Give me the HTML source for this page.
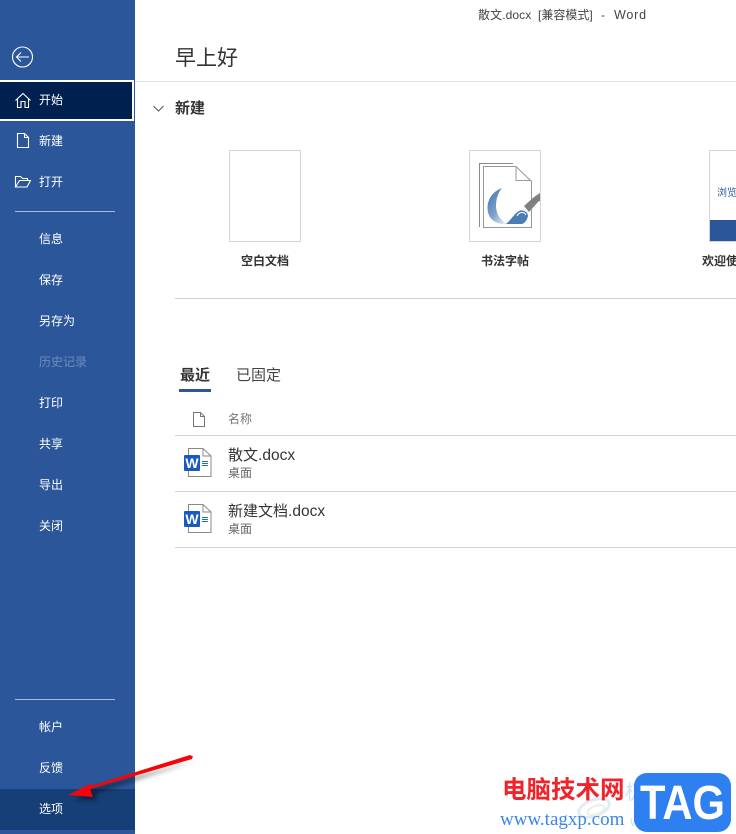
<!DOCTYPE html>
<html lang="zh"><head><meta charset="utf-8"><style>
*{box-sizing:border-box}
html,body{margin:0;padding:0;background:#fff}
body{width:736px;height:834px;position:relative;overflow:hidden;font-family:"Liberation Sans","Noto Sans CJK SC",sans-serif;color:#262626}
.a{position:absolute;white-space:nowrap;line-height:1}
#side{position:absolute;left:0;top:0;width:135px;height:834px;background:#2b579a}
.n{position:absolute;left:39px;font-size:12px;line-height:14px;color:#fff;white-space:nowrap}
.hr{position:absolute;background:#d2d2d2;height:1px}
svg{position:absolute;overflow:visible}
</style></head><body>
<div id="side">
<div style="position:absolute;left:-2px;top:80px;width:136px;height:41px;background:#00214f;border:2px solid #fff"></div>
<svg style="left:0;top:0" width="135" height="200" fill="none" stroke="#fff" stroke-width="1.100">
<circle cx="22.500" cy="57" r="10"/><path d="M16.500 57H29M21 52.500L16.500 57L21 61.500"/>
<path d="M15.500 100.500L23 93.500L30.500 100.500M17.500 99V107.500H21V101.500H25V107.500H28.500V99"/>
<path d="M17.500 133.500H24.500L28.500 137.500V147.500H17.500ZM24.500 133.500V137.500H28.500"/>
<path d="M15.500 187V176.500H20.500L22.500 178.500H27.500V180.500M15.500 187L19.500 180.500H30.500L27 187Z"/>
</svg>
<div class="n" style="top:93px">开始</div>
<div class="n" style="top:134px">新建</div>
<div class="n" style="top:175px">打开</div>
<div style="position:absolute;left:15px;top:211px;width:100px;height:1px;background:#a9bdd9"></div>
<div class="n" style="top:232px">信息</div>
<div class="n" style="top:273px">保存</div>
<div class="n" style="top:314px">另存为</div>
<div class="n" style="top:355px;color:#6f8cb9">历史记录</div>
<div class="n" style="top:396px">打印</div>
<div class="n" style="top:437px">共享</div>
<div class="n" style="top:478px">导出</div>
<div class="n" style="top:519px">关闭</div>
<div style="position:absolute;left:15px;top:699px;width:100px;height:1px;background:#a9bdd9"></div>
<div class="n" style="top:720px">帐户</div>
<div class="n" style="top:761px">反馈</div>
<div style="position:absolute;left:0;top:789px;width:135px;height:41px;background:#163f77"></div>
<div class="n" style="top:802px">选项</div>
</div>

<div class="a" style="left:478px;top:9px;font-size:12px;color:#444;letter-spacing:.1px">散文.docx</div>
<div class="a" style="left:538px;top:9px;font-size:12px;color:#444">[兼容模式]</div>
<div class="a" style="left:601px;top:9px;font-size:12px;color:#444">-</div>
<div class="a" style="left:614px;top:9px;font-size:12.500px;color:#444;letter-spacing:.8px">Word</div>
<div class="a" style="left:175px;top:48px;font-size:21px;color:#333">早上好</div>
<div class="hr" style="left:135px;top:81px;width:601px;background:#e1e1e1"></div>
<svg style="left:153px;top:105px" width="12" height="8" fill="none" stroke="#555" stroke-width="1"><path d="M.5 1L5.500 6L10.500 1"/></svg>
<div class="a" style="left:175px;top:101px;font-size:15px;font-weight:bold;color:#333">新建</div>

<div style="position:absolute;left:229px;top:150px;width:72px;height:92px;border:1px solid #d4d4d4"></div>
<div class="a" style="left:241px;top:255px;font-size:12px;font-weight:bold;color:#333">空白文档</div>

<div style="position:absolute;left:469px;top:150px;width:72px;height:92px;border:1px solid #d4d4d4"></div>
<svg style="left:469px;top:150px" width="72" height="92" fill="none">
<defs><linearGradient id="g" x1="0" y1="0" x2=".8" y2="1"><stop offset="0" stop-color="#3f72ad"/><stop offset=".6" stop-color="#7fa2cb"/><stop offset="1" stop-color="#e2e9f3"/></linearGradient></defs>
<path d="M10.500 77V13.500H44" stroke="#8a8a8a"/>
<path d="M14.500 77.500V16.500H47L62.500 31.500V77.500Z" stroke="#999" fill="#fff"/>
<path d="M47 16.500V30.500H62.500" stroke="#999"/>
<path d="M33 38C22 42 17 52 19 62C20.500 70 28 75 39 74C31 71 27 63 27 56C27 49 29 43 33 38Z" fill="url(#g)"/>
<path d="M37 74C42 70 45 64 50 61C54 59 59 62 59 66C58 70 56 73 53 74Z" fill="#4b7db5"/>
<path d="M48 66C50 62 55 61 57 65" stroke="#fff"/>
<path d="M55 56L65 47L69 52L60 62Z" fill="#808080"/>
<path d="M65 47L71 43V51L68 52Z" fill="#808080"/>
</svg>
<div class="a" style="left:481px;top:255px;font-size:12px;font-weight:bold;color:#333">书法字帖</div>

<div style="position:absolute;left:709px;top:150px;width:40px;height:92px;border:1px solid #d4d4d4;background:#fff"><div style="position:absolute;left:0;bottom:0;width:100%;height:21px;background:#2b579a"></div></div>
<div class="a" style="left:717px;top:189px;font-size:10px;color:#2b579a">浏览</div>
<div class="a" style="left:702px;top:255px;font-size:12px;font-weight:bold;color:#333">欢迎使用</div>
<div class="hr" style="left:175px;top:298px;width:561px"></div>

<div class="a" style="left:180px;top:368px;font-size:15px;font-weight:bold;color:#333">最近</div>
<div style="position:absolute;left:179px;top:389px;width:32px;height:3px;background:#2b579a"></div>
<div class="a" style="left:236px;top:368px;font-size:15px;color:#444">已固定</div>

<svg style="left:193px;top:412px" width="13" height="16" fill="none" stroke="#777" stroke-width="1"><path d="M.5.500H7.500L11.500 4.500V14.500H.5ZM7.500 .5V4.500H11.500"/></svg>
<div class="a" style="left:228px;top:413px;font-size:12px;color:#777">名称</div>
<div class="hr" style="left:175px;top:435px;width:561px"></div>

<svg style="left:184px;top:447px" width="29" height="33">
<path d="M4.500 1.500H19L27 9V29.500H4.500Z" fill="#fff" stroke="#8a8a8a"/><path d="M19 1.500V9H27" fill="none" stroke="#8a8a8a"/>
<path d="M18 14.500H24M18 16.500H24M18 18.500H24" stroke="#2b6cbc" stroke-width=".9"/>
<rect x="0" y="8" width="16" height="16" rx="1" fill="#185abd"/>
<text x="8" y="21" text-anchor="middle" font-size="14" font-weight="bold" fill="#fff" font-family="Liberation Sans">W</text>
</svg>
<div class="a" style="left:228px;top:448px;font-size:15px;color:#333">散文<span style="font-size:15.500px">.docx</span></div>
<div class="a" style="left:228px;top:467px;font-size:12px;color:#666">桌面</div>
<div class="hr" style="left:175px;top:491px;width:561px"></div>

<svg style="left:184px;top:503px" width="29" height="33">
<path d="M4.500 1.500H19L27 9V29.500H4.500Z" fill="#fff" stroke="#8a8a8a"/><path d="M19 1.500V9H27" fill="none" stroke="#8a8a8a"/>
<path d="M18 14.500H24M18 16.500H24M18 18.500H24" stroke="#2b6cbc" stroke-width=".9"/>
<rect x="0" y="8" width="16" height="16" rx="1" fill="#185abd"/>
<text x="8" y="21" text-anchor="middle" font-size="14" font-weight="bold" fill="#fff" font-family="Liberation Sans">W</text>
</svg>
<div class="a" style="left:228px;top:504px;font-size:15px;color:#333">新建文档<span style="font-size:15.500px">.docx</span></div>
<div class="a" style="left:228px;top:523px;font-size:12px;color:#666">桌面</div>
<div class="hr" style="left:175px;top:547px;width:561px"></div>

<svg style="left:0;top:740px" width="210" height="94">
<defs><filter id="s" x="-20%" y="-60%" width="140%" height="220%"><feGaussianBlur stdDeviation="2.500"/></filter></defs>
<path d="M195 21L96 53L97 60L75 60L92 48Z" fill="#000" opacity=".45" filter="url(#s)"/>
<path d="M190 15L193 16.500L192 19L90 49L93 57L68 55L92 43L91 46Z" fill="#f4050a"/>
</svg>

<svg style="left:570px;top:790px" width="166" height="44" fill="none" opacity=".35">
<ellipse cx="24" cy="18" rx="16" ry="8" stroke="#a9c9e6" stroke-width="3" transform="rotate(-20 24 18)"/>
<ellipse cx="26" cy="20" rx="9" ry="4" stroke="#c4dcb5" stroke-width="2" transform="rotate(-20 26 20)"/>
</svg>
<div class="a" style="left:625px;top:783px;font-size:20px;color:#cfe0f3">极光下载站</div>
<div class="a" style="left:630px;top:814px;font-size:14px;color:#cfe0f3">www.xz7.com</div>
<div class="a" style="left:502px;top:779px;font-size:24.500px;font-weight:bold;color:#f0232a">电脑技术网</div>
<div class="a" style="left:500px;top:810px;font-size:19px;font-family:'Liberation Serif',serif;color:#3a86e8">www.tagxp.com</div>
<div style="position:absolute;left:634px;top:773px;width:97px;height:59px;background:#2e7ff0;border-radius:13px"></div>
<svg style="left:0;top:0" width="736" height="834"><text x="640" y="819" textLength="85" lengthAdjust="spacingAndGlyphs" font-size="48" font-weight="bold" fill="#fff" font-family="Liberation Sans">TAG</text></svg>
</body></html>
